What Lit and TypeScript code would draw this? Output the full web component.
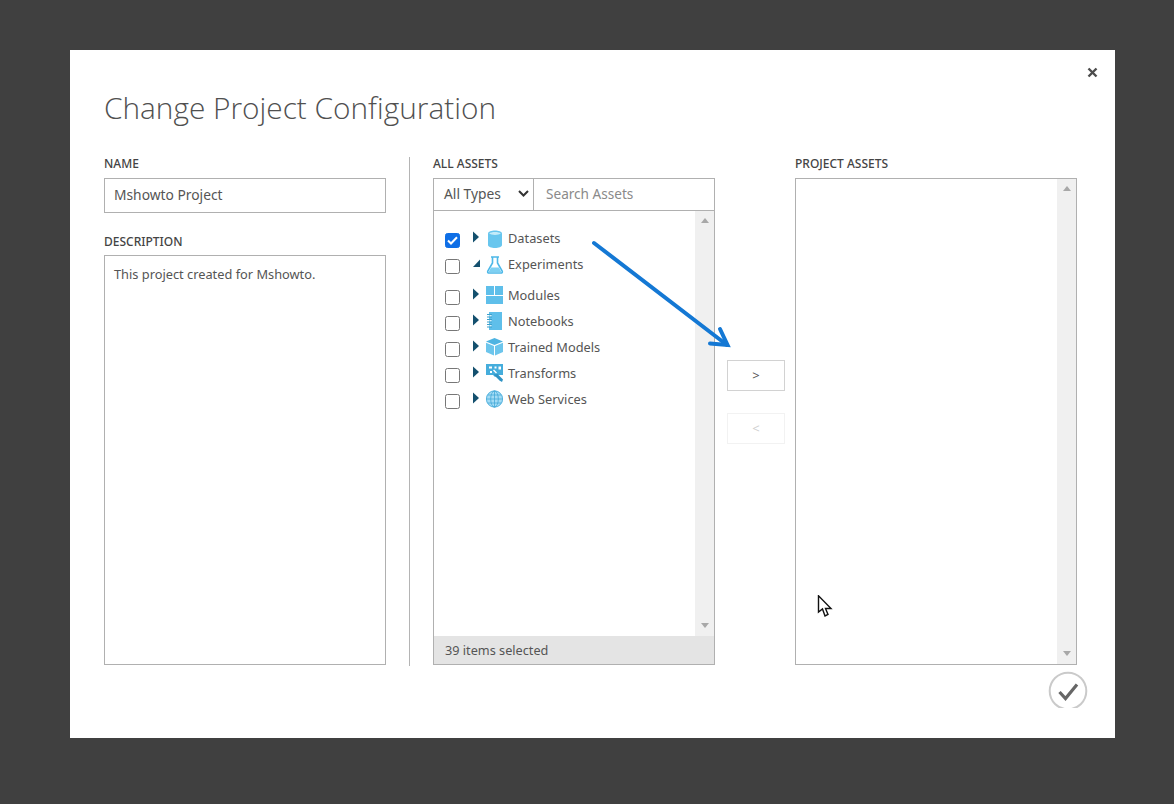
import { LitElement, html, css, svg } from "lit";
import { customElement } from "lit/decorators.js";

const ICONS: Record<string, unknown> = {
  datasets: svg`<path d="M2 3.500C2 -.5 16 -.5 16 3.500V15c0 4-14 4-14 0z" fill="#68c6ee"/><path d="M3.200 3.600c1.800-2 9.800-2 11.600 0c-1.800 1.800-9.800 1.800-11.600 0z" fill="#c4ebf9"/>`,
  experiments: svg`<path d="M5 1h8M6.500 1v6L1.800 15c-.5 1.200.2 2 1.200 2h12c1 0 1.700-.8 1.200-2L11.500 7V1" fill="none" stroke="#4db8e8" stroke-width="1.600"/><path d="M5 11.500h8l2.500 4.800H2.500z" fill="#7ed0f2"/>`,
  modules: svg`<path d="M0 0h8v9H0zM9 0h8v9H9zM0 10h17v8H0z" fill="#5fbfea"/>`,
  notebooks: svg`<path d="M3 0h13v18H3z" fill="#5fbfea"/><path d="M1 2.500h5M1 5h5M1 7.500h5M1 10h5M1 12.500h5M1 15h5" stroke="#3d9fcb" stroke-width="1"/><path d="M3.500 3.300h2v.9h-2zM3.500 8.300h2v.9h-2zM3.500 13.300h2v.9h-2z" fill="#fff"/>`,
  models: svg`<path d="M8.500 0L17 3.400 8.500 6.900 0 3.400z" fill="#4fb4e2"/><path d="M0 4.800l8 3.300V17.500L0 14zM9 8.100l8-3.300V14l-8 3.500z" fill="#6cc5ec"/>`,
  transforms: svg`<path d="M0 0h17v11h-5l-3 2-2-2H0z" fill="#45addc"/><path d="M3 2.500h3v2H3zM8.500 2.500h2v2h-2zM12.500 2.500h2.500v3h-2.500zM4 7h2v2H4zM8 5.500l3 3-1 1-3-3z" fill="#fff"/><path d="M7.500 10.500l6 6 2.500 1.500 1-2.500-5.500-5.500z" fill="#2f93c4"/>`,
  web: svg`<circle cx="8.500" cy="9" r="8.500" fill="#a4dcf5"/><g fill="none" stroke="#45a9d8" stroke-width=".8"><circle cx="8.500" cy="9" r="8.100"/><ellipse cx="8.500" cy="9" rx="3.800" ry="8.100"/><path d="M8.500 1v16M.5 9h16M1.700 5h13.600M1.700 13h13.600"/></g>`,
};

const ROWS = [
  { name: "Datasets", icon: "datasets", checked: true },
  { name: "Experiments", icon: "experiments", open: true },
  { name: "Modules", icon: "modules" },
  { name: "Notebooks", icon: "notebooks" },
  { name: "Trained Models", icon: "models" },
  { name: "Transforms", icon: "transforms" },
  { name: "Web Services", icon: "web" },
];

@customElement("app-root")
export class AppRoot extends LitElement {
  static styles = css`
    :host {
      display: block;
      height: 804px;
      background: #404040;
      font-family: "Noto Sans", "Open Sans", "Liberation Sans", sans-serif;
      color: #444;
      overflow: hidden;
    }
    .dialog {
      position: relative;
      box-sizing: border-box;
      width: 1045px;
      height: 688px;
      margin-left: 70px;
      top: 50px;
      background: #fff;
      padding: 38px 38px 0 34px;
    }
    .close { position: absolute; left: 1017px; top: 17px; width: 11px; height: 11px; }
    h1 {
      margin: 0;
      height: 40px;
      font: 300 29.800px/40px "Open Sans", "Noto Sans", sans-serif;
      color: #505050;
    }
    .columns { display: flex; margin-top: 29px; }
    .left { width: 282px; display: flex; flex-direction: column; }
    .divider { width: 1px; height: 509px; background: #b4b4b4; margin: 0 23px; }
    .mid { width: 282px; display: flex; flex-direction: column; }
    .movers { width: 58px; margin: 0 10px 0 12px; display: flex; flex-direction: column; gap: 22px; padding-top: 203px; }
    .right { width: 282px; display: flex; flex-direction: column; }
    label {
      display: block;
      height: 21px;
      font-size: 12px;
      line-height: 14px;
      font-weight: 500;
      color: #444;
    }
    label.tight { height: 20px; }
    .box { box-sizing: border-box; border: 1px solid #b0b0b0; background: #fff; }
    .name {
      height: 35px;
      padding: 0 9px;
      font-size: 13.800px;
      line-height: 32px;
      color: #555;
      margin-bottom: 22px;
    }
    .desc {
      height: 410px;
      padding: 9px;
      font-size: 12.800px;
      line-height: 18px;
      color: #555;
    }
    .assets { height: 487px; display: flex; flex-direction: column; }
    .filter { height: 31px; flex: none; display: flex; border-bottom: 1px solid #b0b0b0; }
    .select {
      width: 100px; box-sizing: border-box; border-right: 1px solid #b0b0b0;
      padding: 0 4px 2px 10px; font-size: 13.800px; color: #555;
      display: flex; align-items: center; justify-content: space-between;
    }
    .search { padding-left: 12px; font-size: 13.600px; line-height: 30px; color: #8a8a8a; }
    .list { flex: 1; display: flex; min-height: 0; }
    .rows { flex: 1; padding-top: 14px; }
    .row { height: 26px; display: flex; align-items: center; }
    .row.gap { margin-bottom: 5px; }
    .cb {
      box-sizing: border-box; width: 15px; height: 15px; margin: 4px 0 0 11px;
      border: 1px solid #777; border-radius: 2.500px; background: #fff; flex: none;
      display: flex; align-items: center; justify-content: center;
    }
    .cb.on { background: #0f6fe6; border-color: #0f6fe6; }
    .tri { width: 10px; height: 12px; margin: 0 0 2px 11px; flex: none; }
    .ico { width: 18px; height: 18px; margin: 0 0 0 5px; flex: none; overflow: visible; }
    .ico.low { margin-top: 2px; }
    .lbl { margin-left: 4px; font-size: 12.800px; color: #555; white-space: nowrap; }
    .bar { width: 19px; flex: none; background: #f0f0f0; display: flex; flex-direction: column; justify-content: space-between; align-items: center; padding: 7px 0 8px; box-sizing: border-box; }
    .up { width: 0; height: 0; border: 4px solid transparent; border-top: 0; border-bottom: 5px solid #a8a8a8; }
    .down { width: 0; height: 0; border: 4px solid transparent; border-bottom: 0; border-top: 5px solid #a8a8a8; }
    .status {
      box-sizing: border-box;
      height: 28px; flex: none; background: #e4e4e4; padding: 1px 0 0 11px;
      font-size: 12.700px; line-height: 27px; color: #555;
    }
    .project { height: 487px; display: flex; justify-content: flex-end; }
    .move {
      box-sizing: border-box; height: 31px; border: 1px solid #d2d2d2; background: #fff;
      font-size: 13px; line-height: 29px; text-align: center; color: #555;
    }
    .move.off { border-color: #f2f2f2; color: #d0d0d0; }
    .ok { position: absolute; left: 978px; top: 621px; width: 40px; height: 37px; }
    .arrow { position: absolute; left: 510px; top: 180px; width: 170px; height: 130px; overflow: visible; }
    .cursor { position: absolute; left: 747px; top: 545px; width: 16px; height: 24px; }
  `;

  private row(r: (typeof ROWS)[number], i: number) {
    return html`<div class="row ${i === 1 ? "gap" : ""}">
      <span class="cb ${r.checked ? "on" : ""}">
        ${r.checked
          ? html`<svg width="11" height="9" viewBox="0 0 11 9"><path d="M1 4.500L4 7.500 10 1.200" fill="none" stroke="#fff" stroke-width="2"/></svg>`
          : ""}
      </span>
      <svg class="tri" viewBox="0 0 10 12">
        ${r.open
          ? svg`<path d="M2 10L9 2.500V10z" fill="#14506e"/>`
          : svg`<path d="M2 .5l6 5.500-6 5.500z" fill="#14506e"/>`}
      </svg>
      <svg class="ico ${i < 2 ? "low" : ""}" viewBox="0 0 18 18">${ICONS[r.icon]}</svg>
      <span class="lbl">${r.name}</span>
    </div>`;
  }

  render() {
    return html`<div class="dialog">
      <svg class="close" viewBox="0 0 11 11"><path d="M1.500 1.500l8 8M9.500 1.500l-8 8" stroke="#4c4c4c" stroke-width="2.400"/></svg>
      <h1>Change Project Configuration</h1>
      <div class="columns">
        <div class="left">
          <label>NAME</label>
          <div class="box name">Mshowto Project</div>
          <label class="tight">DESCRIPTION</label>
          <div class="box desc">This project created for Mshowto.</div>
        </div>
        <div class="divider"></div>
        <div class="mid">
          <label>ALL ASSETS</label>
          <div class="box assets">
            <div class="filter">
              <div class="select">All Types
                <svg width="11" height="7" viewBox="0 0 11 7"><path d="M1 1l4.500 4.500L10 1" fill="none" stroke="#333" stroke-width="2"/></svg>
              </div>
              <div class="search">Search Assets</div>
            </div>
            <div class="list">
              <div class="rows">${ROWS.map((r, i) => this.row(r, i))}</div>
              <div class="bar"><span class="up"></span><span class="down"></span></div>
            </div>
            <div class="status">39 items selected</div>
          </div>
        </div>
        <div class="movers">
          <div class="move">&gt;</div>
          <div class="move off">&lt;</div>
        </div>
        <div class="right">
          <label>PROJECT ASSETS</label>
          <div class="box project">
            <div class="bar"><span class="up"></span><span class="down"></span></div>
          </div>
        </div>
      </div>
      <svg class="ok" viewBox="0 0 40 37">
        <circle cx="20" cy="20" r="18.300" fill="#fff" stroke="#cacaca" stroke-width="2"/>
        <path d="M11.500 21l6 6.500L29 13.500" fill="none" stroke="#666" stroke-width="3.200"/>
      </svg>
      <svg class="arrow" viewBox="0 0 170 130">
        <path d="M14 13L147 115" stroke="#1478d4" stroke-width="4" stroke-linecap="round"/>
        <path d="M130 113.500L147.500 115 140 99" fill="none" stroke="#1478d4" stroke-width="4" stroke-linecap="round"/>
      </svg>
      <svg class="cursor" viewBox="0 0 16 24">
        <path d="M1.500 .8V17L5.500 14 8 21 11 19.500 8.500 13.500H14z" fill="#fff" stroke="#111" stroke-width="1.400"/>
      </svg>
    </div>`;
  }
}
